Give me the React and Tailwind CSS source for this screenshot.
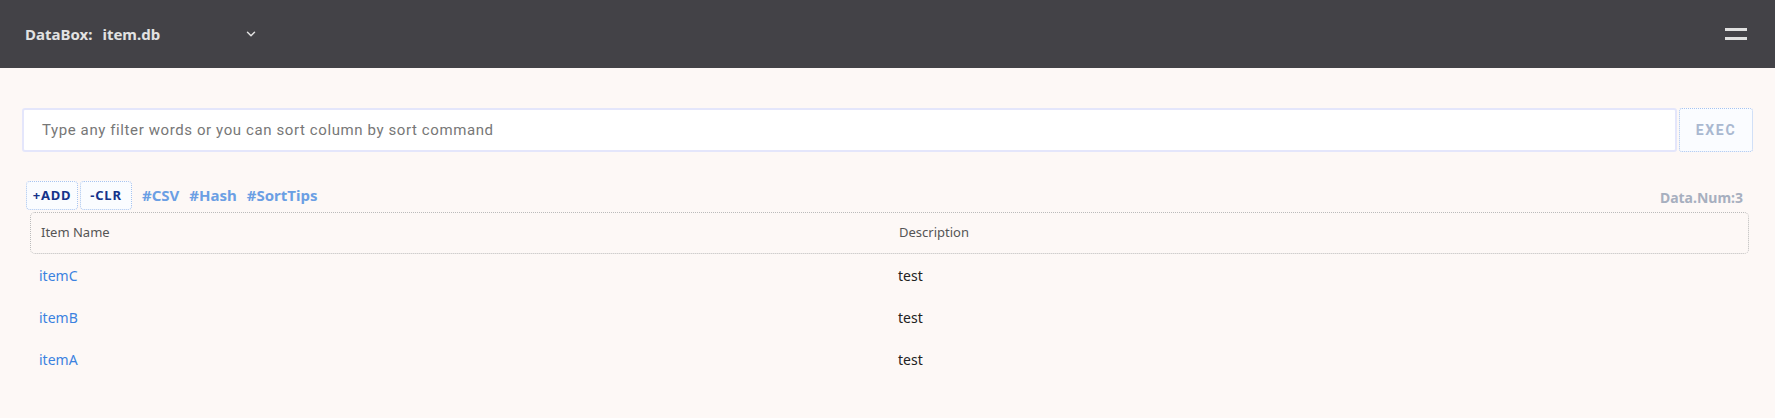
export default function App() {
  const rows = ["itemC", "itemB", "itemA"];
  return (
    <div className="w-[1775px] h-[418px] bg-[#fdf8f6]" style={{ fontFamily: '"Noto Sans", sans-serif' }}>
      <div className="h-[68px] bg-[#434247] flex items-center justify-between pl-[25px] pr-[28px]">
        <div className="flex items-center text-[15px] font-bold text-[#e2e2e2]">
          <span>DataBox:</span>
          <span className="ml-[10px]">item.db</span>
          <svg className="ml-[84px]" width="14" height="14" viewBox="0 0 24 24" fill="none" stroke="#e2e2e2" strokeWidth="2.5" strokeLinecap="round" strokeLinejoin="round"><path d="M6 9l6 6 6-6" /></svg>
        </div>
        <div className="flex flex-col gap-[6px]">
          <div className="w-[22px] h-[3px] bg-[#e0e0e0]" />
          <div className="w-[22px] h-[3px] bg-[#e0e0e0]" />
        </div>
      </div>
      <div className="flex pl-[22px] pr-[22px] mt-[40px] h-[44px]">
        <div className="flex-1 bg-white border-2 border-[#e4e6fb] rounded-[3px] flex items-center pl-[18px] text-[15px] text-[#777] tracking-[0.04em]" style={{ fontFamily: 'Roboto, sans-serif' }}>
          Type any filter words or you can sort column by sort command
        </div>
        <div className="w-[74px] ml-[2px] border border-dotted border-[#a8c4f0] rounded-[3px] bg-[#fafcff] flex items-center justify-center text-[14px] font-bold tracking-[0.12em] text-[#a9b8d0]" style={{ fontFamily: 'Roboto, sans-serif' }}>EXEC</div>
      </div>
      <div className="flex items-end justify-between pl-[26px] pr-[32px] mt-[29px]">
        <div className="flex items-center">
          <div className="w-[52px] h-[29px] border border-dotted border-[#a8c4f0] rounded-[4px] bg-[#fafcff] flex items-center justify-center text-[13px] font-bold tracking-[0.06em] text-[#15338a]">+ADD</div>
          <div className="w-[52px] h-[29px] ml-[2px] border border-dotted border-[#a8c4f0] rounded-[4px] bg-[#fafcff] flex items-center justify-center text-[13px] font-bold tracking-[0.06em] text-[#15338a]">-CLR</div>
          <div className="ml-[10px] flex gap-[10px] text-[15px] font-bold text-[#6b9fe4]">
            <span>#CSV</span><span>#Hash</span><span>#SortTips</span>
          </div>
        </div>
        <div className="text-[14px] font-bold text-[#a7afbf] pb-[2px]">Data.Num:3</div>
      </div>
      <div className="mx-[30px] mt-[2px] ml-[30px] mr-[26px]">
        <div className="h-[42px] border border-dotted border-[#bbb] rounded-[5px] flex items-center text-[13px] text-[#555]">
          <div className="w-[868px] pl-[10px]">Item Name</div>
          <div>Description</div>
        </div>
        {rows.map((r) => (
          <div key={r} className="h-[42px] flex items-center text-[14px]">
            <div className="w-[868px] pl-[9px] text-[#3b82e0]">{r}</div>
            <div className="text-[#222]">test</div>
          </div>
        ))}
      </div>
    </div>
  );
}
